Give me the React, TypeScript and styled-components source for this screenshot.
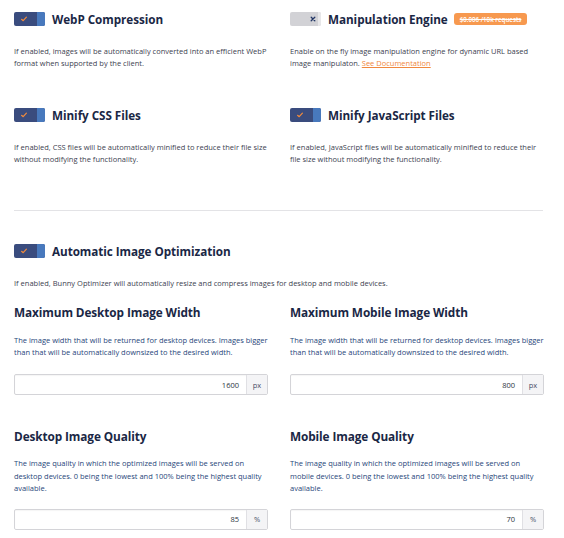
import React from "react";
import styled, { createGlobalStyle } from "styled-components";

const Global = createGlobalStyle`
  html, body { margin: 0; padding: 0; background: #ffffff; }
  body { font-family: "Open Sans", "Noto Sans", sans-serif; -webkit-font-smoothing: antialiased; }
  * { box-sizing: border-box; }
`;

const Page = styled.div`
  width: 564px;
  padding: 12px 20px 0 14px;
`;

const Grid = styled.div<{ $gap?: number; $mt?: number }>`
  display: grid;
  grid-template-columns: 254px 254px;
  column-gap: 22px;
  row-gap: ${(p) => p.$gap ?? 0}px;
  margin-top: ${(p) => p.$mt ?? 0}px;
`;

const Feature = styled.div<{ $mt?: number }>`
  display: flex;
  flex-direction: column;
  margin-top: ${(p) => p.$mt ?? 0}px;
`;

const ToggleRow = styled.div`
  display: flex;
  align-items: center;
  height: 14px;
  gap: 7px;
`;

const ToggleTrack = styled.div<{ $on: boolean }>`
  position: relative;
  width: 31px;
  height: 14px;
  border-radius: 2px;
  background: ${(p) => (p.$on ? "#3a4c7e" : "#d2d2d6")};
  flex-shrink: 0;
  overflow: hidden;
`;

const Knob = styled.div<{ $on: boolean }>`
  position: absolute;
  right: 0;
  top: 0;
  bottom: 0;
  width: ${(p) => (p.$on ? 8 : 3)}px;
  background: ${(p) => (p.$on ? "#4879bd" : "#e7e7e9")};
`;

const Mark = styled.svg<{ $on: boolean }>`
  position: absolute;
  top: 4px;
  left: ${(p) => (p.$on ? 7 : 20)}px;
`;

const Toggle: React.FC<{ on: boolean }> = ({ on }) => (
  <ToggleTrack $on={on}>
    <Knob $on={on} />
    {on ? (
      <Mark $on width="6" height="6" viewBox="0 0 6 6">
        <path d="M0.6 3.3 L2.2 4.7 L5.4 1.2" fill="none" stroke="#f38b3c" strokeWidth="1.2" strokeLinecap="round" strokeLinejoin="round" />
      </Mark>
    ) : (
      <Mark $on={false} width="6" height="6" viewBox="0 0 6 6">
        <path d="M1.2 1.2 L4.8 4.8 M4.8 1.2 L1.2 4.8" fill="none" stroke="#233766" strokeWidth="1.3" strokeLinecap="round" />
      </Mark>
    )}
  </ToggleTrack>
);

const Title = styled.div`
  font-size: 11.7px;
  font-weight: 700;
  color: #1a2745;
  line-height: 14px;
  white-space: nowrap;
  letter-spacing: -0.05px;
`;

const Badge = styled.span`
  display: inline-flex;
  align-items: center;
  height: 12px;
  padding: 0 6px;
  margin-left: -1px;
  border-radius: 3px;
  background: #f7994f;
  color: #ffffff;
  font-size: 6.2px;
  font-weight: 600;
  text-decoration: line-through;
  white-space: nowrap;
`;

const Desc = styled.p<{ $mt: number; $blue?: boolean; $lh?: number }>`
  margin: ${(p) => p.$mt}px 0 0 0;
  font-size: 7.5px;
  line-height: ${(p) => p.$lh ?? 12}px;
  color: ${(p) => (p.$blue ? "#27467a" : "#3c4250")};
`;

const DocLink = styled.a`
  color: #f0883e;
  text-decoration: underline;
`;

const Divider = styled.hr`
  border: none;
  border-top: 1px solid #e3e3e6;
  margin: 45px 0 0 0;
  width: 529px;
`;

const FieldTitle = styled.div`
  font-size: 11.8px;
  font-weight: 700;
  color: #1a2745;
  line-height: 16px;
  white-space: nowrap;
  letter-spacing: -0.1px;
`;

const Field = styled.div`
  display: flex;
  flex-direction: column;
`;

const InputGroup = styled.div<{ $mt: number }>`
  display: flex;
  height: 21px;
  margin-top: ${(p) => p.$mt}px;
  border: 1px solid #d4d4d8;
  border-radius: 2px;
  background: #ffffff;
  box-shadow: inset 0 1px 1px rgba(0, 0, 0, 0.04);
`;

const InputValue = styled.div`
  flex: 1;
  display: flex;
  align-items: center;
  justify-content: flex-end;
  padding-right: 7px;
  font-size: 7.5px;
  color: #2c3440;
`;

const Suffix = styled.div`
  width: 21px;
  display: flex;
  align-items: center;
  justify-content: center;
  background: #f4f4f6;
  border-left: 1px solid #e0e0e4;
  font-size: 7.5px;
  color: #4a5068;
`;

const Addon: React.FC<{ value: string; unit: string; mt: number }> = ({ value, unit, mt }) => (
  <InputGroup $mt={mt}>
    <InputValue>{value}</InputValue>
    <Suffix>{unit}</Suffix>
  </InputGroup>
);

export default function App() {
  return (
    <>
      <Global />
      <Page>
        <Grid>
          <Feature>
            <ToggleRow>
              <Toggle on />
              <Title>WebP Compression</Title>
            </ToggleRow>
            <Desc $mt={19}>
              If enabled, images will be automatically converted into an efficient WebP format when supported by the client.
            </Desc>
          </Feature>
          <Feature>
            <ToggleRow>
              <Toggle on={false} />
              <Title>Manipulation Engine</Title>
              <Badge>$0.006 /10k requests</Badge>
            </ToggleRow>
            <Desc $mt={19}>
              Enable on the fly image manipulation engine for dynamic URL based image manipulaton.{" "}
              <DocLink href="#">See Documentation</DocLink>
            </Desc>
          </Feature>
          <Feature $mt={39}>
            <ToggleRow>
              <Toggle on />
              <Title>Minify CSS Files</Title>
            </ToggleRow>
            <Desc $mt={19}>
              If enabled, CSS files will be automatically minified to reduce their file size without modifying the functionality.
            </Desc>
          </Feature>
          <Feature $mt={39}>
            <ToggleRow>
              <Toggle on />
              <Title>Minify JavaScript Files</Title>
            </ToggleRow>
            <Desc $mt={19}>
              If enabled, JavaScript files will be automatically minified to reduce their file size without modifying the functionality.
            </Desc>
          </Feature>
        </Grid>

        <Divider />

        <Feature $mt={33}>
          <ToggleRow>
            <Toggle on />
            <Title>Automatic Image Optimization</Title>
          </ToggleRow>
          <Desc $mt={19}>
            If enabled, Bunny Optimizer will automatically resize and compress images for desktop and mobile devices.
          </Desc>
        </Feature>

        <Grid $gap={33} $mt={15}>
          <Field>
            <FieldTitle>Maximum Desktop Image Width</FieldTitle>
            <Desc $mt={14} $blue>
              The image width that will be returned for desktop devices. Images bigger than that will be automatically downsized to the desired width.
            </Desc>
            <Addon value="1600" unit="px" mt={16} />
          </Field>
          <Field>
            <FieldTitle>Maximum Mobile Image Width</FieldTitle>
            <Desc $mt={14} $blue>
              The image width that will be returned for desktop devices. Images bigger than that will be automatically downsized to the desired width.
            </Desc>
            <Addon value="800" unit="px" mt={16} />
          </Field>
          <Field>
            <FieldTitle>Desktop Image Quality</FieldTitle>
            <Desc $mt={13} $blue $lh={12.5}>
              The image quality in which the optimized images will be served on desktop devices. 0 being the lowest and 100% being the highest quality available.
            </Desc>
            <Addon value="85" unit="%" mt={14} />
          </Field>
          <Field>
            <FieldTitle>Mobile Image Quality</FieldTitle>
            <Desc $mt={13} $blue $lh={12.5}>
              The image quality in which the optimized images will be served on mobile devices. 0 being the lowest and 100% being the highest quality available.
            </Desc>
            <Addon value="70" unit="%" mt={14} />
          </Field>
        </Grid>
      </Page>
    </>
  );
}
